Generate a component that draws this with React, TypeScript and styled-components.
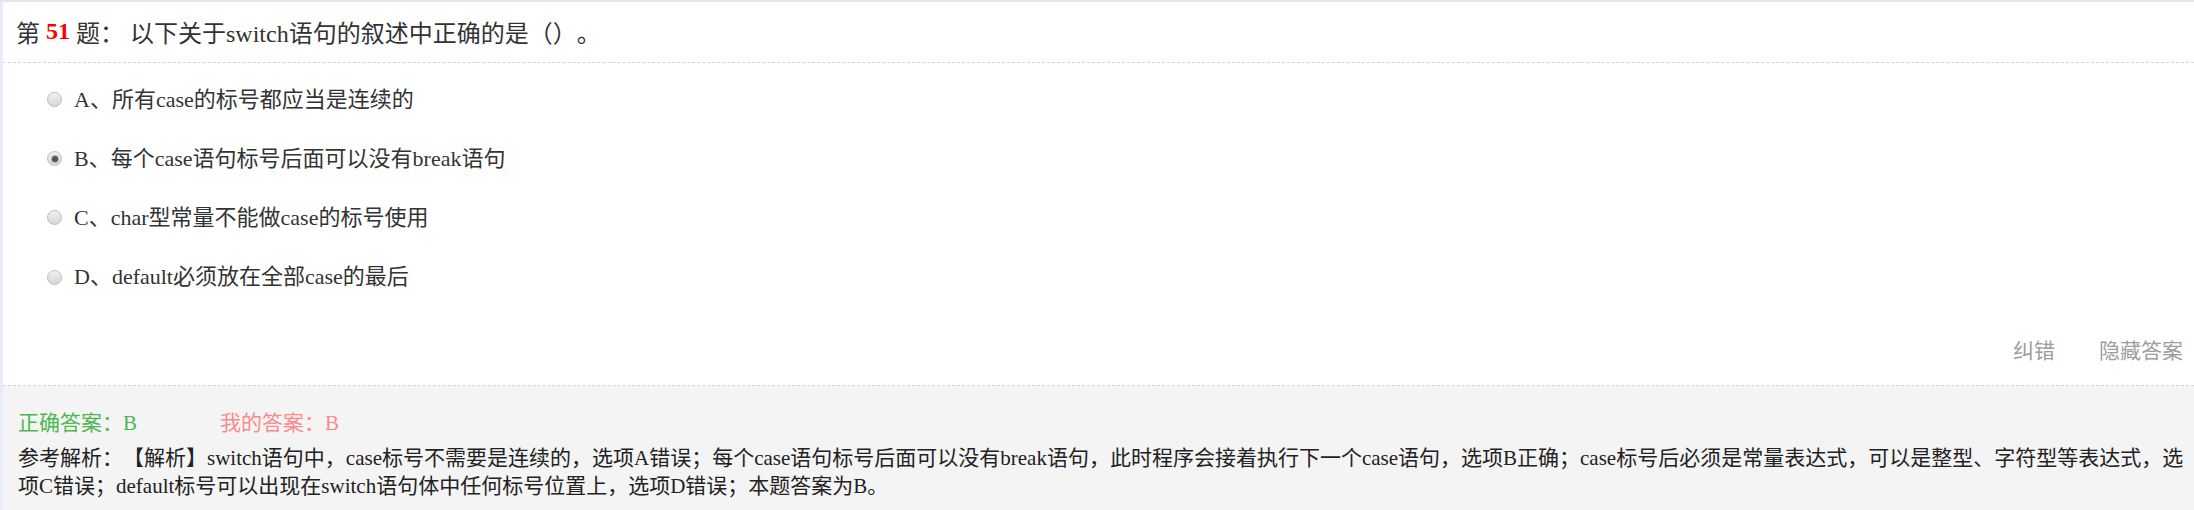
import React from 'react'
import styled, { createGlobalStyle } from 'styled-components'

type Option = { key: string; text: string; checked?: boolean }

const options: Option[] = [
  { key: 'A', text: '所有case的标号都应当是连续的' },
  { key: 'B', text: '每个case语句标号后面可以没有break语句', checked: true },
  { key: 'C', text: 'char型常量不能做case的标号使用' },
  { key: 'D', text: 'default必须放在全部case的最后' },
]

const analysis =
  '参考解析：【解析】switch语句中，case标号不需要是连续的，选项A错误；每个case语句标号后面可以没有break语句，此时程序会接着执行下一个case语句，选项B正确；case标号后必须是常量表达式，可以是整型、字符型等表达式，选项C错误；default标号可以出现在switch语句体中任何标号位置上，选项D错误；本题答案为B。'

export default function App() {
  return (
    <>
      <GlobalStyle />
      <Page>
        <Card>
          <Title>
            第 <Num>51</Num> 题： 以下关于switch语句的叙述中正确的是（）。
          </Title>

          <OptionList>
            {options.map((o) => (
              <OptionRow key={o.key}>
                <Radio checked={!!o.checked} />
                <OptionLabel>
                  {o.key}、{o.text}
                </OptionLabel>
              </OptionRow>
            ))}
          </OptionList>

          <Actions>
            <ActionLink>纠错</ActionLink>
            <ActionLink>隐藏答案</ActionLink>
          </Actions>

          <AnswerPanel>
            <AnswerRow>
              <AnswerTag tone="right">正确答案：B</AnswerTag>
              <AnswerTag tone="mine">我的答案：B</AnswerTag>
            </AnswerRow>
            <Analysis>{analysis}</Analysis>
          </AnswerPanel>
        </Card>
      </Page>
    </>
  )
}

const GlobalStyle = createGlobalStyle`
  html, body {
    margin: 0;
    padding: 0;
    background: #fff;
  }

  body {
    font-family: "Liberation Serif", "Noto Sans CJK SC", serif;
    color: #333;
    text-spacing-trim: space-all;
  }
`

const Page = styled.div`
  width: 2194px;
  height: 510px;
  box-sizing: border-box;
  border-top: 2px solid #e6e6e6;
  display: flex;
  overflow: hidden;
`

const Card = styled.div`
  flex: 1;
  display: flex;
  flex-direction: column;
  border-left: 3px solid #e4eefa;
`

const Title = styled.div`
  height: 61px;
  box-sizing: border-box;
  padding: 0 0 2px 13px;
  display: flex;
  align-items: center;
  font-size: 24px;
  white-space: pre;
  border-bottom: 1px dashed #d4d4d4;
`

const Num = styled.b`
  color: #f00;
`

const OptionList = styled.div`
  display: flex;
  flex-direction: column;
  padding: 7px 0 0 44px;
`

const OptionRow = styled.label`
  height: 59.2px;
  display: flex;
  align-items: center;
  gap: 12px;
  font-size: 22px;
  color: #333;
`

const Radio = styled.span<{ checked: boolean }>`
  width: 15px;
  height: 15px;
  flex: none;
  box-sizing: border-box;
  border-radius: 50%;
  border: 1px solid #bdbdbd;
  background: linear-gradient(#f1f1f1, #d6d6d6);
  display: flex;
  align-items: center;
  justify-content: center;

  &::after {
    content: '';
    width: 6px;
    height: 6px;
    border-radius: 50%;
    background: #555;
    box-shadow: 0 0 0 1px #b8b8b8;
    display: ${({ checked }) => (checked ? 'block' : 'none')};
  }
`

const OptionLabel = styled.span`
  line-height: 30px;
`

const Actions = styled.div`
  display: flex;
  justify-content: flex-end;
  gap: 44px;
  padding: 24px 11px 14px 0;
  border-bottom: 1px dashed #d4d4d4;
`

const ActionLink = styled.span`
  font-size: 21px;
  line-height: 40px;
  color: #9d9d9d;
  cursor: pointer;
`

const AnswerPanel = styled.div`
  flex: 1;
  background: #f4f4f4;
  padding: 23px 2px 0 15px;
`

const AnswerRow = styled.div`
  display: flex;
  font-size: 21px;
  line-height: 28px;
`

const AnswerTag = styled.span<{ tone: 'right' | 'mine' }>`
  width: 202px;
  color: ${({ tone }) => (tone === 'right' ? '#4db84d' : '#fb8b8b')};
`

const Analysis = styled.p`
  margin: 7px 0 0;
  font-size: 21px;
  line-height: 28px;
  color: #222;
`
